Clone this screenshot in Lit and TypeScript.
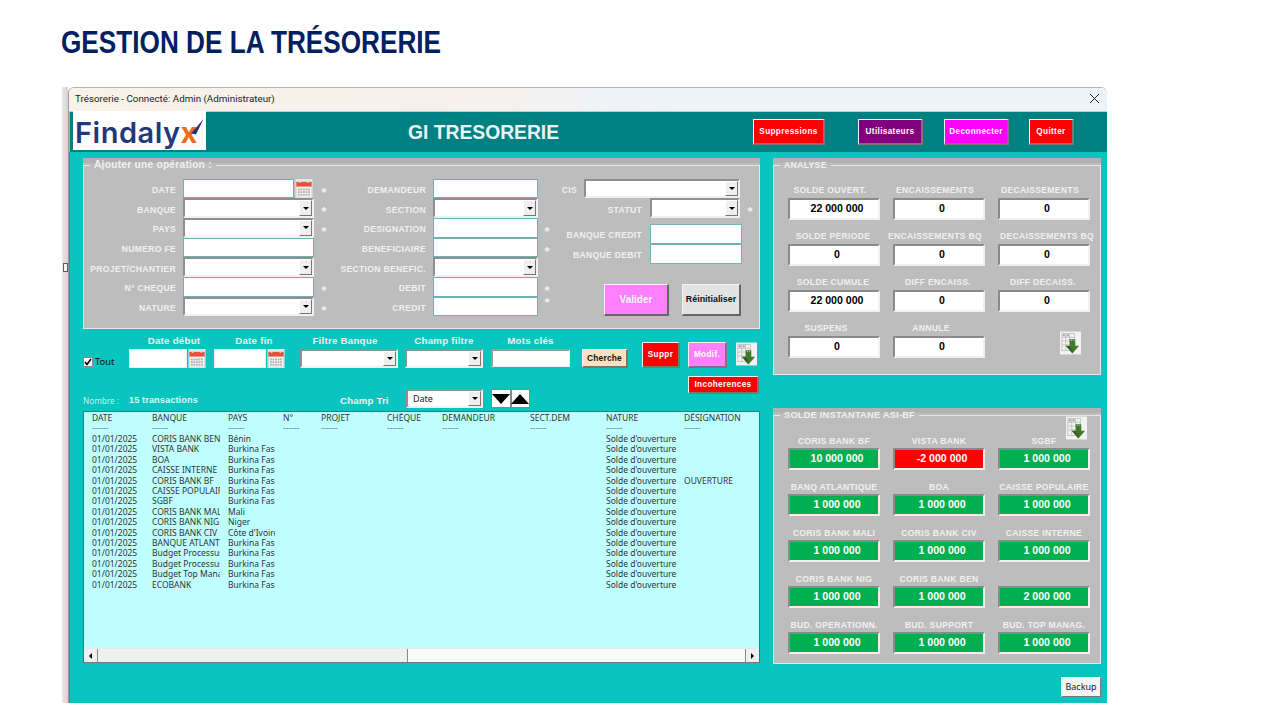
import { LitElement, html, css, svg } from "lit";
import { customElement } from "lit/decorators.js";

const calIcon = html`<svg class="cal" viewBox="0 0 18 20"><rect x="0" y="0" width="18" height="20" fill="#e6e6e6"/><rect x="1" y="4" width="16" height="15" fill="#f5f5f5" stroke="#cfcfcf" stroke-width=".5"/><rect x="1" y="3" width="16" height="5" fill="#e8503a"/><circle cx="4.5" cy="3" r="1.2" fill="#ddd"/><circle cx="13.5" cy="3" r="1.2" fill="#ddd"/>${[0, 1, 2].map((r) => [0, 1, 2, 3, 4].map((c) => svg`<rect x="${2.5 + c * 2.7}" y="${10 + r * 2.8}" width="2" height="2" fill="#b4b4b4"/>`))}</svg>`;

const dlIcon = html`<svg class="dl" viewBox="0 0 22 24"><rect width="22" height="24" fill="#f2f2f2"/><g fill="none" stroke="#b9b9b9" stroke-width=".8"><rect x="2" y="2" width="13" height="18"/><path d="M2 6h13M2 10h9M2 14h9M6 2v18M10 2v8"/></g><rect x="3" y="3" width="2" height="2" fill="#999"/><rect x="7" y="3" width="2" height="2" fill="#999"/><path d="M10 8h6v7h4l-7 8-7-8h4z" fill="#3f7a2a"/><path d="M13 23l-7-8h4l3 4z" fill="#2b4d1d" opacity=".55"/><rect x="11.5" y="9" width="1" height="1" fill="#b9e0a6"/><rect x="14" y="9" width="1" height="1" fill="#b9e0a6"/></svg>`;

const sel = (cls = "") => html`<div class="sel ${cls}"><span class="ddb"><i></i></span></div>`;
const inp = (cls = "") => html`<div class="inp ${cls}"></div>`;

const form1 = [
  ["DATE", "date", true],
  ["BANQUE", "sel", true],
  ["PAYS", "sel", true],
  ["NUMERO FE", "inp", false],
  ["PROJET/CHANTIER", "sel", false],
  ["N° CHEQUE", "inp", true],
  ["NATURE", "sel", true],
] as const;
const form2 = [
  ["DEMANDEUR", "inp", ""],
  ["SECTION", "sel", ""],
  ["DESIGNATION", "inp", "s"],
  ["BENEFICIAIRE", "inp", "s"],
  ["SECTION BENEFIC.", "sel", ""],
  ["DEBIT", "inp", "s"],
  ["CREDIT", "inp", "up"],
] as const;

const analyse = [
  ["SOLDE OUVERT.", "22 000 000", "pr8"],
  ["ENCAISSEMENTS", "0", "pr8"],
  ["DECAISSEMENTS", "0", "pr8"],
  ["SOLDE PERIODE", "0", "pr2"],
  ["ENCAISSEMENTS BQ", "0", "pr8"],
  ["DECAISSEMENTS BQ", "0", "pl6"],
  ["SOLDE CUMULE", "22 000 000", "pr2"],
  ["DIFF ENCAISS.", "0", "pr2"],
  ["DIFF DECAISS.", "0", "pr2"],
  ["SUSPENS", "0", "pr16"],
  ["ANNULE", "0", "pr16"],
];

const soldes = [
  ["CORIS BANK BF", "10 000 000", ""],
  ["VISTA BANK", "-2 000 000", "neg"],
  ["SGBF", "1 000 000", ""],
  ["BANQ ATLANTIQUE", "1 000 000", ""],
  ["BOA", "1 000 000", ""],
  ["CAISSE POPULAIRE", "1 000 000", ""],
  ["CORIS BANK MALI", "1 000 000", ""],
  ["CORIS BANK CIV", "1 000 000", ""],
  ["CAISSE INTERNE", "1 000 000", ""],
  ["CORIS BANK NIG", "1 000 000", ""],
  ["CORIS BANK BEN", "1 000 000", ""],
  ["\u00a0", "2 000 000", ""],
  ["BUD. OPERATIONN.", "1 000 000", ""],
  ["BUD. SUPPORT", "1 000 000", ""],
  ["BUD. TOP MANAG.", "1 000 000", ""],
];

const cols = ["DATE", "BANQUE", "PAYS", "N°", "PROJET", "CHÈQUE", "DEMANDEUR", "SECT.DEM", "NATURE", "DÉSIGNATION"];
const txs: [string, string, string?][] = [
  ["CORIS BANK BEN", "Bénin"],
  ["VISTA BANK", "Burkina Faso"],
  ["BOA", "Burkina Faso"],
  ["CAISSE INTERNE", "Burkina Faso"],
  ["CORIS BANK BF", "Burkina Faso", "OUVERTURE"],
  ["CAISSE POPULAIRE", "Burkina Faso"],
  ["SGBF", "Burkina Faso"],
  ["CORIS BANK MALI", "Mali"],
  ["CORIS BANK NIG", "Niger"],
  ["CORIS BANK CIV", "Côte d'Ivoire"],
  ["BANQUE ATLANTIQUE", "Burkina Faso"],
  ["Budget Processus", "Burkina Faso"],
  ["Budget Processus", "Burkina Faso"],
  ["Budget Top Management", "Burkina Faso"],
  ["ECOBANK", "Burkina Faso"],
];

@customElement("app-root")
export class AppRoot extends LitElement {
  static styles = css`
    :host { display: block; width: 1280px; height: 720px; overflow: hidden; background: #fff; font-family: "Liberation Sans", Arial, sans-serif; }
    * { box-sizing: border-box; }
    h1 { margin: 0; height: 59px; padding: 24px 0 0 61px; font-size: 32px; line-height: 36px; font-weight: 700; color: #002060; white-space: nowrap; transform: scaleX(.818); transform-origin: 61px 0; }
    .desk { display: flex; margin-left: 62px; width: 1045px; height: 616px; margin-top: 28px; position: relative; }
    .strip { width: 6px; background: linear-gradient(90deg, #e8e8e8, #d4d4d4); }
    .mark { position: absolute; left: 1px; top: 176px; width: 5px; height: 9px; border: 1px solid #3c6e50; background: #f4f4f4; }
    .win { flex: 1; display: flex; flex-direction: column; border-radius: 6px 6px 0 0; overflow: hidden; border-top: 1px solid #b5b5b5; border-left: 1px solid #9a9a9a; }
    .titlebar { height: 24px; flex: none; display: flex; align-items: center; justify-content: space-between; padding: 0 7px 2px 6px; background: linear-gradient(90deg, #f8f2ea 0%, #f6f0ea 35%, #eef3fa 58%, #eef3fa 100%); border-bottom: 1px solid #c8c8c8; font: 9.8px Roboto, sans-serif; color: #222; }
    .x { width: 11px; height: 11px; }
    .hdr { height: 40px; flex: none; background: #008080; display: grid; grid-template-columns: 137px 201px 151px 194px 72px 33px 65px 21px 65px 20px 45px; align-items: start; border-left: 1px solid #b0b0b0; }
    .logo { height: 39px; width: 133px; margin-left: 3px; margin-top: -1px; background: #fff; display: flex; align-items: flex-start; position: relative; padding-left: 2px; font: 600 29px/39px Inter, sans-serif; letter-spacing: .5px; color: #1f3a7a; white-space: nowrap; }
    .logo span { display: block; margin-top: 2px; }
    .logo b { font-weight: 700; color: #ee6c1f; }
    .tick { position: absolute; left: 117px; top: 7px; width: 14px; height: 17px; }
    .gi { grid-column: 3; font-weight: 700; font-size: 19.3px; line-height: 41px; color: #e9f4f4; white-space: nowrap; }
    .gi-gap { grid-column: 2; }
    .hbtn { margin-top: 7px; height: 26px; display: flex; align-items: center; justify-content: center; font-weight: 700; font-size: 8.2px; letter-spacing: .35px; color: #fff; white-space: nowrap; border: 1px solid; border-width: 1px 2px 2px 1px; border-color: #f2f2f2 #777 #777 #f2f2f2; }
    .red { background: #ff0000; }
    .purple { background: #800080; }
    .magenta { background: #ff00ff; }
    .pink { background: #ff80ff; }
    .body { flex: 1; background: #0ac4bf; padding: 6px 0 0 13px; display: grid; grid-template-columns: 677px 328px; column-gap: 13px; align-content: start; border-left: 1px solid #0aa8a4; }
    .left, .right { display: flex; flex-direction: column; }
    .panel { background: #bdbdbd; padding-top: 1px; box-shadow: inset 0 5px 0 #b2b2b2; position: relative; }
    fieldset { margin: 0; padding: 0; min-width: 0; height: 100%; border: 1px solid #e6e6e6; }
    legend { margin-left: 6px; padding: 0 4px; font-weight: 700; line-height: 12px; color: #f0f0f0; height: 12px; white-space: nowrap; }
    legend.a { font-size: 10.2px; letter-spacing: .25px; }
    legend.b { font-size: 8.7px; letter-spacing: .3px; }
    legend.c { font-size: 9.3px; letter-spacing: .2px; }
    .ajout { height: 171px; }
    .ajout fieldset { display: flex; padding-top: 7.5px; }
    .lab { font-weight: 700; font-size: 8.6px; letter-spacing: .3px; color: #f0f0f0; white-space: nowrap; }
    .fc1, .fc2 { display: grid; grid-auto-rows: 19.7px; align-items: center; }
    .fc1 .lab, .fc2 .lab { text-align: right; padding-top: 3px; }
    .fc1 { width: 250px; grid-template-columns: 92px 138px 20px; }
    .fc2 { width: 222px; grid-template-columns: 92px 112px 18px; }
    .fc1 .ctl { margin-left: 7px; width: 131px; }
    .fc2 .ctl { margin-left: 7px; width: 105px; }
    .star { text-align: center; color: #f0f0f0; font-weight: 700; font-size: 13px; line-height: 13px; padding-top: 7px; height: 19.7px; }
    .star.up { padding-top: 0; margin-top: -1px; }
    .ctl { height: 100%; }
    .inp { background: #fff; border: 1px solid #6fb2b2; height: 100%; }
    .sel { background: #fff; position: relative; height: 100%; border: 2px solid; border-color: #8f8f8f #f0f0f0 #f0f0f0 #8f8f8f; }
    .ddb { position: absolute; right: 0; top: 0; bottom: 0; width: 13px; background: #efefef; border: 1px solid; border-color: #fff #777 #777 #fff; display: flex; align-items: center; justify-content: center; }
    .ddb i { width: 0; height: 0; border: 3.5px solid transparent; border-top: 3.5px solid #000; border-bottom: 0; }
    .datewrap { display: flex; height: 100%; }
    .datewrap .inp { width: 111px; flex: none; }
    .cal { width: 18px; height: 19px; display: block; margin-left: 1px; flex: none; }
    .fc3 { display: flex; flex-direction: column; width: 200px; }
    .f3row { display: flex; align-items: center; height: 19.7px; flex: none; }
    .f3row .lab { padding-top: 3px; }
    .l21 { width: 21px; text-align: right; margin-right: 7px; }
    .l86 { width: 86px; text-align: right; margin-right: 8px; }
    .c156 { width: 156px; }
    .c90 { width: 90px; }
    .c92 { width: 92px; }
    .s3 { margin-left: 5px; width: 10px; }
    .gap6 { height: 6px; flex: none; }
    .f3row.bq { height: 20px; }
    .acts { display: flex; margin: 20px 0 0 48px; gap: 13px; }
    .valider { width: 65px; height: 32px; background: #ff80ff; color: #f4f4f4; font-weight: 700; font-size: 10px; display: flex; align-items: center; justify-content: center; border: 1px solid; border-width: 1px 2px 2px 1px; border-color: #f4f4f4 #666 #666 #f4f4f4; }
    .reinit { width: 59px; height: 32px; background: #e2e2e2; color: #111; font-weight: 700; font-size: 8.9px; display: flex; align-items: center; justify-content: center; border: 1px solid; border-width: 1px 2px 2px 1px; border-color: #f4f4f4 #666 #666 #f4f4f4; white-space: nowrap; }
    .filters { display: flex; height: 41px; margin-top: 6px; align-items: flex-start; }
    .fl { display: flex; flex-direction: column; }
    .fl > span { height: 14px; line-height: 11px; text-align: center; color: #f0f0f0; font-weight: 700; font-size: 9.7px; letter-spacing: .25px; white-space: nowrap; }
    .fl > span.s14 { padding-left: 14px; }
    .fl > span.s10 { padding-left: 10px; }
    .fl > span.e8 { padding-right: 8px; }
    .row19 { height: 19px; display: flex; }
    .sunk { background: #fff; border: 1px solid; border-color: #9a9a9a #eee #eee #9a9a9a; }
    .tout { width: 46px; margin-top: 21px; display: flex; align-items: center; gap: 2px; height: 11px; font: 9.4px "Noto Sans", sans-serif; color: #111; }
    .chk { width: 10px; height: 10px; background: #fff; border: 1px solid #8a8a8a; display: flex; align-items: center; justify-content: center; }
    .chk svg { width: 8px; height: 8px; }
    .w76 { width: 76px; } .w70 { width: 70px; margin-left: 9px; } .w98 { width: 98px; margin-left: 16px; } .w78 { width: 78px; margin-left: 7px; } .w79 { width: 79px; margin-left: 8px; }
    .d58 { width: 58px; flex: none; } .d51 { width: 52px; flex: none; }
    .w76 .sunk, .w70 .sunk { border-color: #eee; }
    .full { width: 100%; }
    .sel.full { height: 19px; }
    .mots { height: 18px; width: 100%; border-width: 2px 1px 1px 2px; }
    .cherche { width: 46px; height: 19px; margin: 14px 0 0 12px; background: #fde0c0; color: #111; font-weight: 700; font-size: 8.4px; letter-spacing: .2px; display: flex; align-items: center; justify-content: center; border: 1px solid; border-width: 1px 2px 2px 1px; border-color: #f2f2f2 #777 #777 #f2f2f2; }
    .suppr { width: 38px; height: 26px; margin-left: 14px; font-size: 8.2px; }
    .modif { width: 39px; height: 26px; margin-left: 8px; font-size: 8.2px; background: #ff80ff; }
    .dl { display: block; width: 21px; height: 24px; }
    .fdl { margin: 7px 0 0 9px; }
    .row2 { display: flex; height: 35px; position: relative; }
    .nb { margin-top: 19px; width: 46px; font-size: 8.2px; color: #c6efec; font-family: "Noto Sans", sans-serif; line-height: 11px; white-space: nowrap; }
    .nbv { margin-top: 19px; width: 211px; font-weight: 700; font-size: 9.2px; letter-spacing: .1px; color: #d8f8f5; line-height: 11px; white-space: nowrap; }
    .tri { margin-top: 19px; width: 66px; font-weight: 700; font-size: 9.6px; letter-spacing: .2px; color: #f0f0f0; line-height: 12px; white-space: nowrap; }
    .trisel { width: 77px; height: 19px; margin-top: 13px; position: relative; background: #fff; border: 2px solid; border-color: #8f8f8f #f0f0f0 #f0f0f0 #8f8f8f; font: 9px/15px "Noto Sans", sans-serif; padding-left: 5px; color: #222; }
    .arrows { display: flex; margin: 13px 0 0 8px; }
    .arr { width: 19.5px; height: 19px; background: #fff; border: 1px solid #888; display: flex; align-items: center; justify-content: center; }
    .arr i { width: 0; height: 0; border-left: 9px solid transparent; border-right: 9px solid transparent; }
    .arr .dn { border-top: 10px solid #000; }
    .arr .up { border-bottom: 10px solid #000; }
    .incoh { width: 71px; height: 18px; font-size: 8.2px; margin: 0 0 0 158px; }
    .list { height: 252px; background: #bfffff; border: 1px solid; border-color: #0a8f8c #0a8f8c #777 #0a8f8c; display: flex; flex-direction: column; font: 8.5px/10.43px "Noto Sans", sans-serif; color: #333; }
    .rows { flex: 1; padding: 1px 0 0 8px; overflow: hidden; }
    .tr { display: grid; grid-template-columns: 60px 76px 55px 38px 66px 55px 88px 76px 78px 70px; height: 10.43px; }
    .tr > div { overflow: hidden; white-space: nowrap; }
    .tr > div.c1, .tr > div.c2 { margin-right: 8px; }
    .dash { color: #777; }
    .sb { height: 14px; flex: none; display: flex; background: #f0f0f0; border-top: 1px solid #e8e8e8; }
    .sbb { width: 14px; background: #f0f0f0; display: flex; align-items: center; justify-content: center; border-right: 1px solid #8a8a8a; }
    .sbb.r { border-right: 0; border-left: 1px solid #8a8a8a; }
    .sbb i { width: 0; height: 0; border: 3.5px solid transparent; border-left: 0; border-right: 3.5px solid #000; }
    .sbb.r i { border-right: 0; border-left: 3.5px solid #000; }
    .thumb { width: 310px; background: #f0f0f0; border-right: 1px solid #8a8a8a; }
    .track { flex: 1; background: #fafafa; }
    .ana { height: 217px; }
    .ana fieldset { padding-top: 14px; }
    .sol fieldset { padding-top: 14px; }
    .cells { display: grid; grid-template-columns: repeat(3, 92px); column-gap: 13px; margin-left: 14px; }
    .cell { height: 46px; display: flex; flex-direction: column; }
    .cell .lab { height: 13px; line-height: 11px; white-space: nowrap; display: flex; justify-content: center; }
    .sol .cell .lab { line-height: 13px; }
    .pr8 { padding-right: 8px; } .pr2 { padding-right: 2px; } .pr16 { padding-right: 16px; } .pl6 { padding-left: 6px; }
    .val { height: 22px; background: #fff; border: 2px solid; border-color: #8a8a8a #f0f0f0 #f0f0f0 #8a8a8a; text-align: center; padding-left: 6px; font-weight: 700; font-size: 10.6px; line-height: 16px; color: #000; white-space: nowrap; }
    .val.g { background: #00b050; color: #fff; }
    .val.neg { background: #ff0000; color: #fff; }
    .adl { justify-self: end; margin: 8px 9px 0 0; }
    .sol { height: 256px; margin-top: 33px; }
    .soldl { position: absolute; right: 14px; top: 8px; }
    .bottom { grid-column: 1 / 3; display: flex; justify-content: flex-end; padding-top: 13px; }
    .backup { width: 40px; height: 20px; background: #f5f5f5; border: 1px solid; border-color: #fff #777 #777 #fff; font: 9px/18px "Noto Sans", sans-serif; text-align: center; color: #222; }
  `;

  render() {
    const control = (k: string) =>
      k === "date"
        ? html`<div class="ctl"><div class="datewrap">${inp()}${calIcon}</div></div>`
        : k === "sel"
          ? html`<div class="ctl">${sel()}</div>`
          : html`<div class="ctl">${inp()}</div>`;
    return html`
      <h1>GESTION DE LA TRÉSORERIE</h1>
      <div class="desk">
        <div class="strip"></div>
        <div class="mark"></div>
        <div class="win">
          <div class="titlebar">
            <span>Trésorerie - Connecté: Admin (Administrateur)</span>
            <svg class="x" viewBox="0 0 11 11"><path d="M1 1l9 9M10 1l-9 9" stroke="#222" stroke-width="1" fill="none"/></svg>
          </div>
          <div class="hdr">
            <div class="logo"><span>Findaly<b>x</b></span><svg class="tick" viewBox="0 0 14 17"><path d="M1 15.5L13.5 1 6 16.5z" fill="#1f3a7a"/></svg></div>
            <div class="gi-gap"></div>
            <div class="gi">GI TRESORERIE</div>
            <div></div>
            <div class="hbtn red">Suppressions</div>
            <div></div>
            <div class="hbtn purple">Utilisateurs</div>
            <div></div>
            <div class="hbtn magenta">Deconnecter</div>
            <div></div>
            <div class="hbtn red">Quitter</div>
          </div>
          <div class="body">
            <div class="left">
              <div class="panel ajout">
                <fieldset>
                  <legend class="a">Ajouter une opération :</legend>
                  <div class="fc1">
                    ${form1.map(([l, k, s]) => html`<div class="lab">${l}</div>${control(k)}<div class="star">${s ? "*" : ""}</div>`)}
                  </div>
                  <div class="fc2">
                    ${form2.map(([l, k, s]) => html`<div class="lab">${l}</div>${control(k)}<div class="star ${s === "up" ? "up" : ""}">${s ? "*" : ""}</div>`)}
                  </div>
                  <div class="fc3">
                    <div class="f3row"><div class="lab l21">CIS</div><div class="ctl c156">${sel()}</div></div>
                    <div class="f3row"><div class="lab l86">STATUT</div><div class="ctl c90">${sel()}</div><div class="star s3">*</div></div>
                    <div class="gap6"></div>
                    <div class="f3row bq"><div class="lab l86">BANQUE CREDIT</div><div class="ctl c92">${inp()}</div></div>
                    <div class="f3row bq"><div class="lab l86">BANQUE DEBIT</div><div class="ctl c92">${inp()}</div></div>
                    <div class="acts"><div class="valider">Valider</div><div class="reinit">Réinitialiser</div></div>
                  </div>
                </fieldset>
              </div>
              <div class="filters">
                <div class="tout"><span class="chk"><svg viewBox="0 0 8 8"><path d="M1 4l2 2.5L7 1" stroke="#000" stroke-width="1.6" fill="none"/></svg></span>Tout</div>
                <div class="fl w76"><span class="s14">Date début</span><div class="row19"><div class="sunk d58"></div>${calIcon}</div></div>
                <div class="fl w70"><span class="s10">Date fin</span><div class="row19"><div class="sunk d51"></div>${calIcon}</div></div>
                <div class="fl w98"><span class="e8">Filtre Banque</span><div class="row19">${sel("full")}</div></div>
                <div class="fl w78"><span>Champ filtre</span><div class="row19">${sel("full")}</div></div>
                <div class="fl w79"><span>Mots clés</span><div class="row19"><div class="sunk mots"></div></div></div>
                <div class="cherche">Cherche</div>
                <div class="hbtn red suppr">Suppr</div>
                <div class="hbtn modif">Modif.</div>
                <div class="fdl">${dlIcon}</div>
              </div>
              <div class="row2">
                <div class="nb">Nombre :</div>
                <div class="nbv">15 transactions</div>
                <div class="tri">Champ Tri</div>
                <div class="trisel">Date<span class="ddb"><i></i></span></div>
                <div class="arrows"><div class="arr"><i class="dn"></i></div><div class="arr"><i class="up"></i></div></div>
                <div class="hbtn red incoh">Incoherences</div>
              </div>
              <div class="list">
                <div class="rows">
                  <div class="tr">${cols.map((c, i) => html`<div class="c${i}">${c}</div>`)}</div>
                  <div class="tr dash">${cols.map((_, i) => html`<div class="c${i}">------</div>`)}</div>
                  ${txs.map(
                    ([b, p, d]) => html`<div class="tr">
                      <div>01/01/2025</div><div class="c1">${b}</div><div class="c2">${p}</div><div></div><div></div><div></div><div></div><div></div><div>Solde d'ouverture</div><div>${d ?? ""}</div>
                    </div>`,
                  )}
                </div>
                <div class="sb">
                  <div class="sbb"><i></i></div>
                  <div class="thumb"></div>
                  <div class="track"></div>
                  <div class="sbb r"><i></i></div>
                </div>
              </div>
            </div>
            <div class="right">
              <div class="panel ana">
                <fieldset>
                  <legend class="b">ANALYSE</legend>
                  <div class="cells">
                    ${analyse.map(([l, v, c]) => html`<div class="cell"><div class="lab ${c}">${l}</div><div class="val">${v}</div></div>`)}
                    <div class="adl">${dlIcon}</div>
                  </div>
                </fieldset>
              </div>
              <div class="panel sol">
                <div class="soldl">${dlIcon}</div>
                <fieldset>
                  <legend class="c">SOLDE INSTANTANE ASI-BF</legend>
                  <div class="cells">
                    ${soldes.map(([l, v, c]) => html`<div class="cell"><div class="lab">${l}</div><div class="val ${c || "g"}">${v}</div></div>`)}
                  </div>
                </fieldset>
              </div>
            </div>
            <div class="bottom"><div class="backup">Backup</div></div>
          </div>
        </div>
      </div>
    `;
  }
}
